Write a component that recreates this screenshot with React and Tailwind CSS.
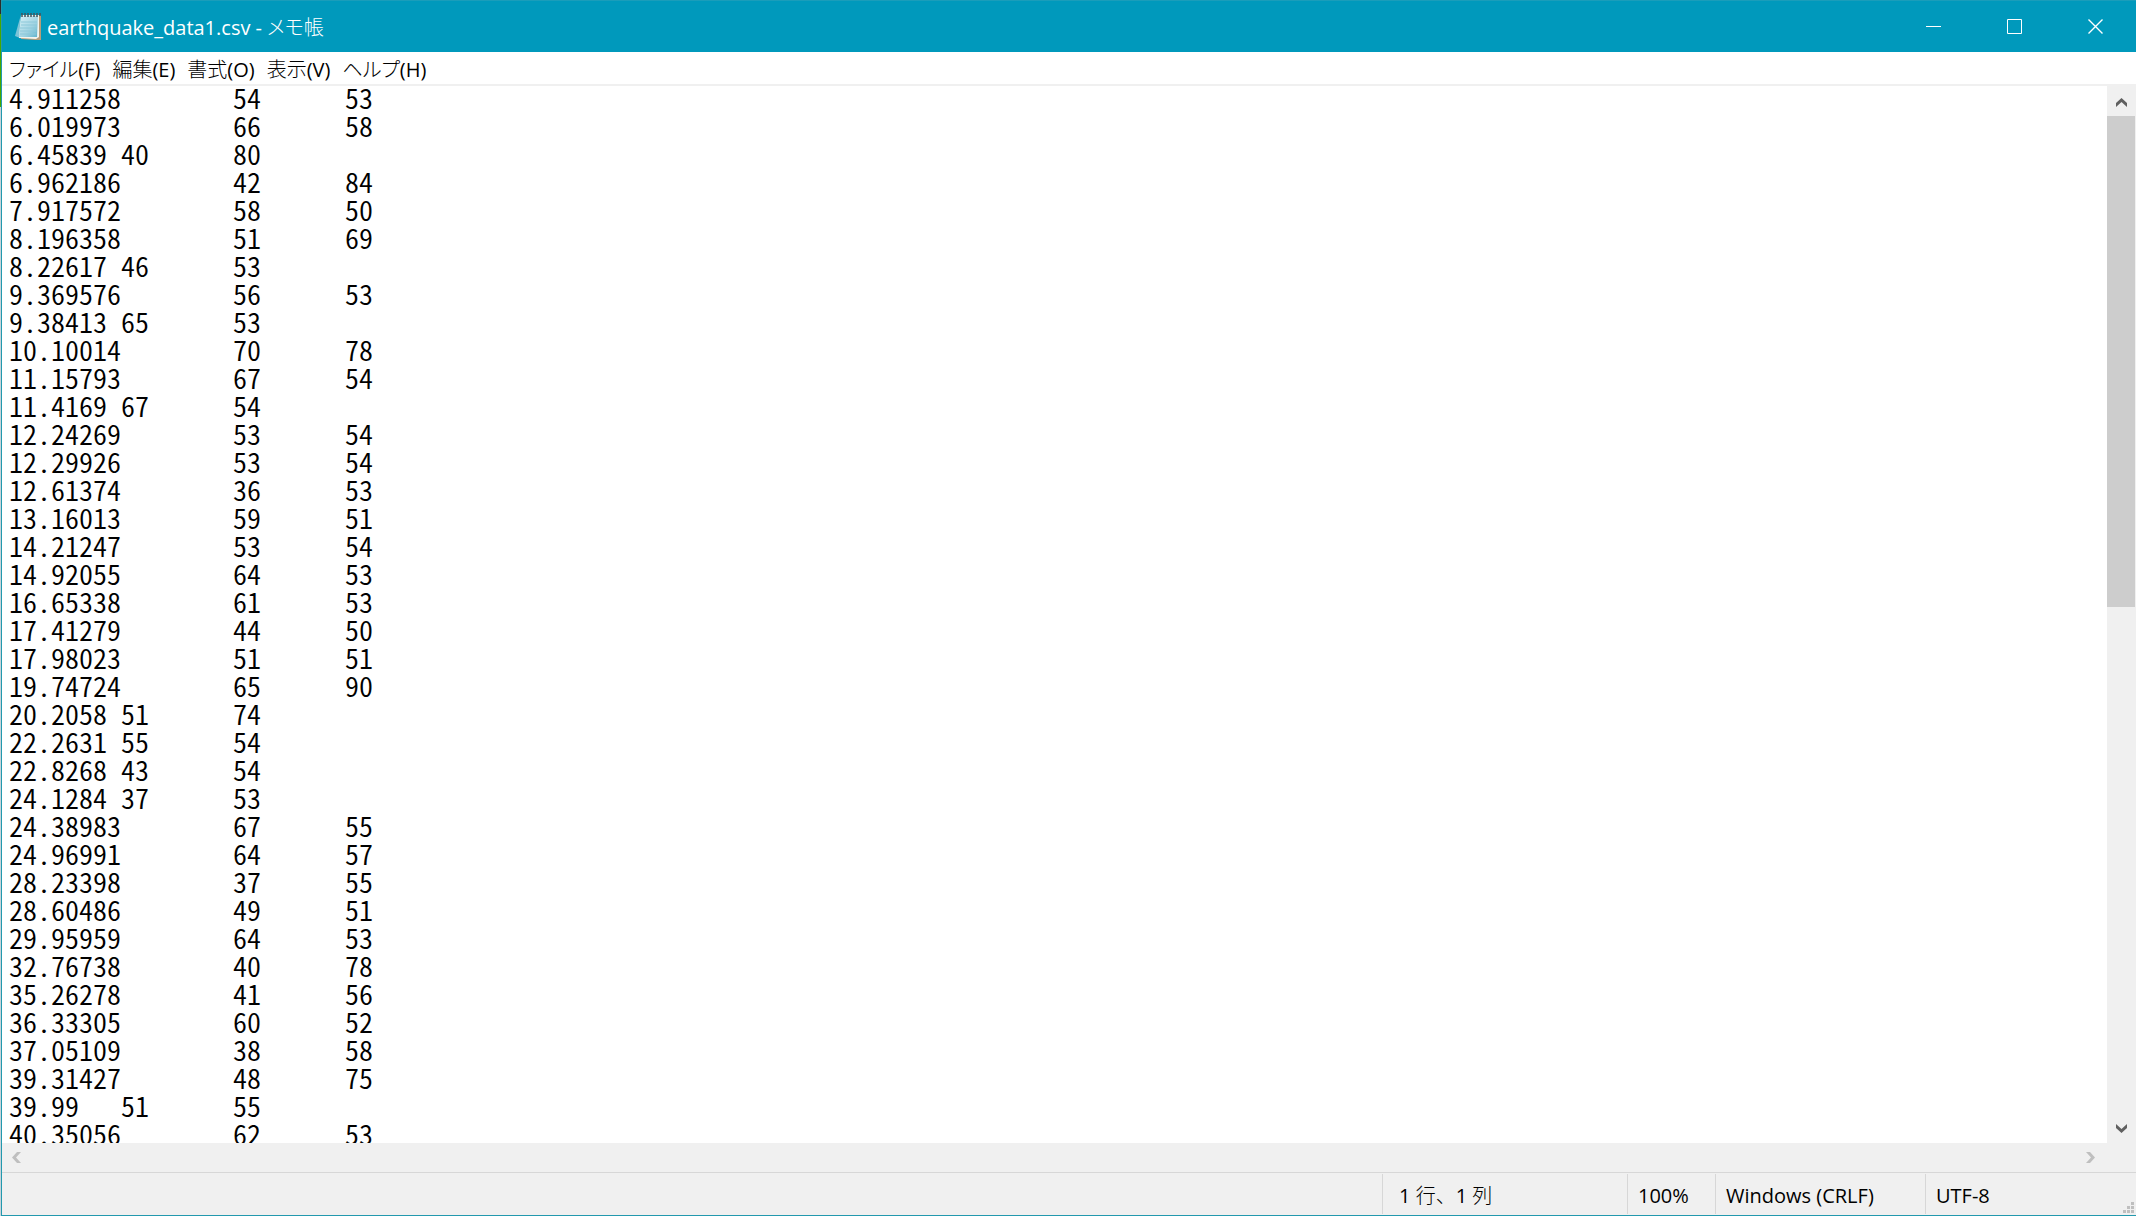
import { useState } from "react";

const ROWS = [
  [4.911258, 54, 53],
  [6.019973, 66, 58],
  [6.45839, 40, 80],
  [6.962186, 42, 84],
  [7.917572, 58, 50],
  [8.196358, 51, 69],
  [8.22617, 46, 53],
  [9.369576, 56, 53],
  [9.38413, 65, 53],
  [10.10014, 70, 78],
  [11.15793, 67, 54],
  [11.4169, 67, 54],
  [12.24269, 53, 54],
  [12.29926, 53, 54],
  [12.61374, 36, 53],
  [13.16013, 59, 51],
  [14.21247, 53, 54],
  [14.92055, 64, 53],
  [16.65338, 61, 53],
  [17.41279, 44, 50],
  [17.98023, 51, 51],
  [19.74724, 65, 90],
  [20.2058, 51, 74],
  [22.2631, 55, 54],
  [22.8268, 43, 54],
  [24.1284, 37, 53],
  [24.38983, 67, 55],
  [24.96991, 64, 57],
  [28.23398, 37, 55],
  [28.60486, 49, 51],
  [29.95959, 64, 53],
  [32.76738, 40, 78],
  [35.26278, 41, 56],
  [36.33305, 60, 52],
  [37.05109, 38, 58],
  [39.31427, 48, 75],
  [39.99, 51, 55],
  [40.35056, 62, 53],
];

const MENUS = ["ファイル(F)", "編集(E)", "書式(O)", "表示(V)", "ヘルプ(H)"];

function NotepadIcon() {
  return (
    <svg className="h-7 w-7" viewBox="0 0 28 28" aria-hidden="true">
      <defs>
        <linearGradient id="page" x1="0" y1="0" x2="1" y2="1">
          <stop offset="0" stopColor="#d9f1f7" />
          <stop offset="0.6" stopColor="#9fd3e2" />
          <stop offset="1" stopColor="#5fb3cb" />
        </linearGradient>
      </defs>
      <path d="M5 5 L0 23 L5 25 Z" fill="#7cc4d8" />
      <path d="M6 2 H26 V27 H20 L6 26 Z" fill="#b79d78" />
      <path d="M6 2 H24 V24 L21 26 L4 25 Z" fill="#f2f4ee" />
      <path d="M6 3 H23 L22 24 L4 24 Z" fill="url(#page)" />
      <path d="M6 9 H22 M6 12 H22 M5 15 H22 M5 18 H21 M5 21 H21" stroke="#8cc8d9" strokeWidth="1" />
      <path d="M7 0 V4 M10 0 V4 M13 0 V4 M16 0 V4 M19 0 V4 M22 0 V4 M25 0 V3" stroke="#40545c" strokeWidth="1.5" />
    </svg>
  );
}

function VerticalArrow({ d }) {
  return (
    <svg className="h-[9px] w-[11px]" viewBox="0 0 11 9" fill="currentColor" aria-hidden="true">
      <path d={d} />
    </svg>
  );
}

function HorizontalArrow({ d }) {
  return (
    <svg className="h-[11px] w-[9px]" viewBox="0 0 9 11" fill="currentColor" aria-hidden="true">
      <path d={d} />
    </svg>
  );
}

function TitleBar() {
  const button = "flex w-[81px] items-center justify-center hover:bg-white/10";
  return (
    <header className="flex h-[52px] shrink-0 items-stretch border-t border-[#1a9dba] bg-[#0099bc] text-white">
      <div className="flex flex-1 items-center gap-1 pl-[13px]">
        <NotepadIcon />
        <h1 className="pt-[2px] text-[20px] leading-7">earthquake_data1.csv - メモ帳</h1>
      </div>
      <button type="button" aria-label="最小化" className={button}>
        <svg className="h-[15px] w-[15px]" viewBox="0 0 15 15" stroke="currentColor">
          <path d="M0 7.5 H15" />
        </svg>
      </button>
      <button type="button" aria-label="最大化" className={button}>
        <svg className="h-[15px] w-[15px]" viewBox="0 0 15 15" stroke="currentColor" fill="none">
          <path d="M0.5 0.5 H14.5 V14.5 H0.5 Z" />
        </svg>
      </button>
      <button type="button" aria-label="閉じる" className={button}>
        <svg className="h-[15px] w-[15px]" viewBox="0 0 15 15" stroke="currentColor" strokeWidth="1.4">
          <path d="M0.5 0.5 L14.5 14.5 M14.5 0.5 L0.5 14.5" />
        </svg>
      </button>
    </header>
  );
}

function MenuBar() {
  return (
    <nav className="flex h-[34px] shrink-0 items-center gap-3 border-b-2 border-[#f0f0f0] bg-white pt-[3px] pl-[7px] text-[20px] leading-7 text-black">
      {MENUS.map((label) => (
        <button key={label} type="button">
          {label}
        </button>
      ))}
    </nav>
  );
}

function StatusBar() {
  const cell = "my-px flex shrink-0 items-center border-l border-[#d7d7d7] pt-[3px]";
  return (
    <footer className="relative flex h-[43px] shrink-0 justify-end border-t border-[#d7d7d7] bg-[#f0f0f0] text-[20px] leading-7 text-black [font-feature-settings:normal]">
      <div className={`${cell} w-[245px] pl-4`}>1 行、1 列</div>
      <div className={`${cell} w-[88px] pl-[10px]`}>100%</div>
      <div className={`${cell} w-[210px] pl-[10px]`}>Windows (CRLF)</div>
      <div className={`${cell} w-[211px] pl-[10px]`}>UTF-8</div>
      <svg className="absolute right-[2px] bottom-[2px] h-[11px] w-[11px]" viewBox="0 0 11 11" fill="#bfbfbf" aria-hidden="true">
        <path d="M8 0h3v3h-3z M4 4h3v3h-3z M8 4h3v3h-3z M0 8h3v3h-3z M4 8h3v3h-3z M8 8h3v3h-3z" />
      </svg>
    </footer>
  );
}

export default function App() {
  const [text, setText] = useState(ROWS.map((row) => row.join("\t")).join("\n"));

  return (
    <div lang="ja" className="flex h-screen overflow-hidden bg-white font-['Open_Sans','Noto_Sans_CJK_JP_Light','Noto_Sans_CJK_JP',sans-serif] font-normal [font-feature-settings:'palt']">
      {/* sliver of the desktop left of the window */}
      <div className="flex w-px shrink-0 flex-col bg-[#c8d3da]">
        <div className="h-[14px] bg-[#2b2b2b]" />
        <div className="h-[93px] bg-[#45a800]" />
      </div>
      <main className="flex min-w-0 flex-1 flex-col border-b border-l border-[#2299ae]">
        <TitleBar />
        <MenuBar />
        <div className="flex min-h-0 flex-1">
          <textarea
            aria-label="テキスト エディター"
            className="-mt-[3px] block min-w-0 flex-1 resize-none overflow-hidden whitespace-pre bg-transparent pl-[7px] font-['Noto_Sans_CJK_JP_DemiLight','Noto_Sans_CJK_JP',monospace] text-[28px] leading-7 font-normal text-black outline-none [font-feature-settings:'hwid'] [tab-size:112px]"
            spellCheck={false}
            value={text}
            onChange={(e) => setText(e.target.value)}
          />
          <div className="flex w-[29px] shrink-0 flex-col bg-[#f0f0f0] text-[#606060]">
            <button type="button" aria-label="上へスクロール" className="flex h-[30px] items-center justify-center pt-[3px]">
              <VerticalArrow d="M0 5 L5.5 0 L11 5 V9 L5.5 4 L0 9 Z" />
            </button>
            <div className="flex-1 pr-px">
              <div className="h-[49.25%] bg-[#cdcdcd]" />
            </div>
            <button type="button" aria-label="下へスクロール" className="flex h-[30px] items-center justify-center">
              <VerticalArrow d="M0 0 L5.5 5 L11 0 V4 L5.5 9 L0 4 Z" />
            </button>
          </div>
        </div>
        <div className="flex h-[29px] shrink-0 items-center justify-between bg-[#f0f0f0] pr-[41px] pl-[10px] text-[#bfbfbf]">
          <button type="button" aria-label="左へスクロール">
            <HorizontalArrow d="M5 0 H9 L4 5.5 L9 11 H5 L0 5.5 Z" />
          </button>
          <button type="button" aria-label="右へスクロール">
            <HorizontalArrow d="M0 0 H4 L9 5.5 L4 11 H0 L5 5.5 Z" />
          </button>
        </div>
        <StatusBar />
      </main>
    </div>
  );
}
